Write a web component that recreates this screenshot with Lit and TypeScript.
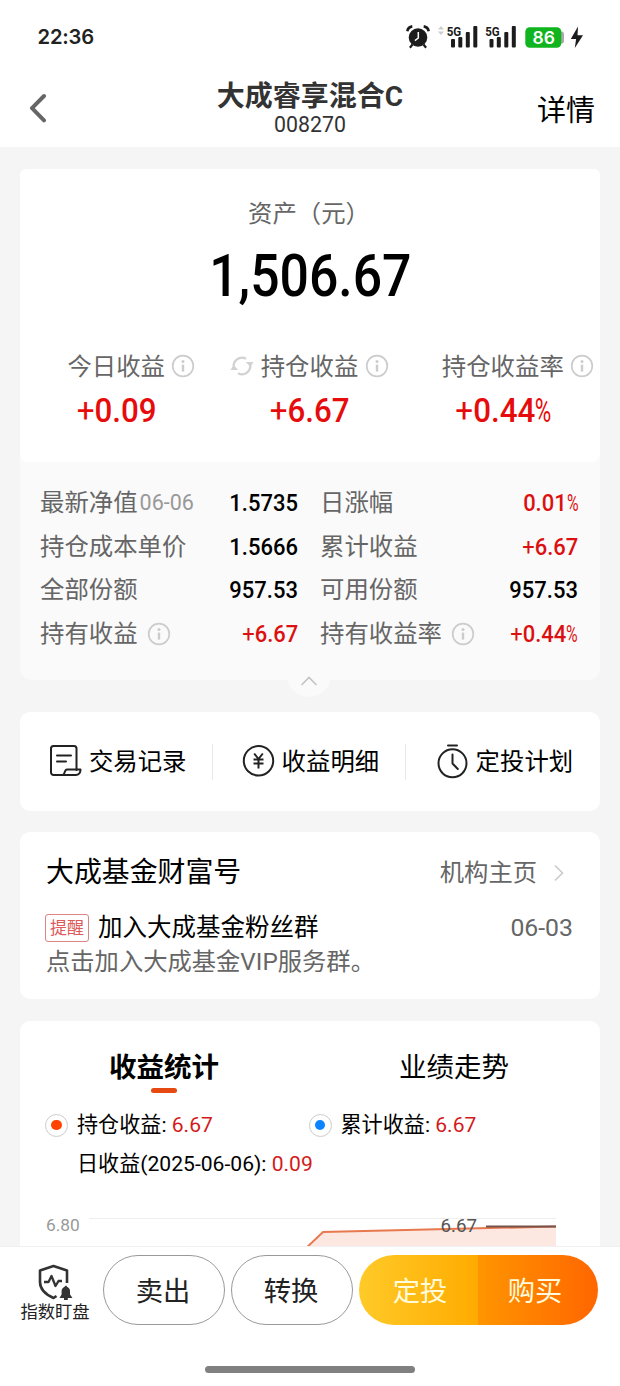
import { LitElement, html, css, svg, nothing } from "lit";
import { customElement, property } from "lit/decorators.js";

type Row = { label: string; date?: string; info?: boolean; value: string; red?: boolean };

const LEFT: Row[] = [
  { label: "最新净值", date: "06-06", value: "1.5735" },
  { label: "持仓成本单价", value: "1.5666" },
  { label: "全部份额", value: "957.53" },
  { label: "持有收益", info: true, value: "+6.67", red: true },
];
const RIGHT: Row[] = [
  { label: "日涨幅", value: "0.01%", red: true },
  { label: "累计收益", value: "+6.67", red: true },
  { label: "可用份额", value: "957.53" },
  { label: "持有收益率", info: true, value: "+0.44%", red: true },
];

const infoIcon = html`<svg width="24" height="24" viewBox="0 0 24 24" fill="none">
  <circle cx="12" cy="12" r="10.3" stroke="#ccc" stroke-width="1.7" />
  <circle cx="12" cy="7.4" r="1.5" fill="#ccc" />
  <path d="M12 10.6v7" stroke="#ccc" stroke-width="2.4" />
</svg>`;

const refreshIcon = html`<svg width="24" height="24" viewBox="0 0 24 24" fill="none" stroke="#d2d2d2" stroke-width="2.3">
  <path d="M4 14A8.3 8.3 0 0 1 16 4.7" />
  <path d="M20 10A8.3 8.3 0 0 1 8 19.3" />
  <path d="M0.5 16L3.6 11L8.2 16Z" fill="#d2d2d2" stroke="none" />
  <path d="M23.5 8L20.4 13L15.8 8Z" fill="#d2d2d2" stroke="none" />
</svg>`;

const bars = (x: number) => svg`
  <text x=${x - 4.3} y="35.6" font-family="Roboto" font-size="13.5" font-weight="700" textLength="14.5" lengthAdjust="spacingAndGlyphs" fill="#1c1c1c">5G</text>
  <rect x=${x} y="39" width="4" height="8.5" rx="1" />
  <rect x=${x + 7.3} y="37" width="4" height="10.5" rx="1" />
  <rect x=${x + 14.8} y="32" width="4" height="15.5" rx="1" />
  <rect x=${x + 22.3} y="26" width="4" height="21.5" rx="1" />`;

/** Narrow numeric figure, with a light percent sign. */
@customElement("num-text")
class NumText extends LitElement {
  @property() value = "";
  static styles = css`
    :host { display: inline-block; white-space: nowrap; font-family: Roboto, sans-serif; font-weight: 500; }
    .pct { display: inline-block; font-weight: 400; transform: scaleX(0.72); transform-origin: left; margin-right: -0.2em; }
    .plus { font-weight: 400; }
  `;
  render() {
    const plus = this.value.startsWith("+");
    const pct = this.value.endsWith("%");
    const body = this.value.replace(/[+%]/g, "");
    return html`${plus ? html`<span class="plus">+</span>` : nothing}${body}${pct ? html`<span class="pct">%</span>` : nothing}`;
  }
}

@customElement("app-root")
class AppRoot extends LitElement {
  static styles = css`
    :host {
      display: flex; flex-direction: column; width: 620px; height: 1386px; overflow: hidden;
      background: #f5f5f5; color: #000; font-weight: 400;
      font-family: Roboto, "Noto Sans CJK SC", sans-serif; font-size: 24.4px;
    }
    * { box-sizing: border-box; }
    svg { display: block; flex: none; }
    .status { height: 73px; flex: none; background: #fff; display: flex; }
    .time { width: 400px; padding-left: 37.5px; font: 600 20.2px/74px Inter, sans-serif; color: #222; letter-spacing: -0.2px; }
    .head { height: 74px; flex: none; background: #fff; display: grid; grid-template-columns: 150px 1fr 150px; }
    .back { padding: 20px 0 0 28px; }
    .titles { text-align: center; color: #333; }
    .title { font-size: 28px; line-height: 34px; font-weight: 700; padding-top: 7px; height: 40px; }
    .code { font-size: 21.3px; line-height: 24px; }
    .more { font-size: 29px; line-height: 76px; text-align: right; padding-right: 25px; }
    .scroll { flex: none; height: 1099px; overflow: hidden; padding: 22px 20px 0; display: flex; flex-direction: column; }
    .card { flex: none; background: #fff; border-radius: 10px; }
    .asset { position: relative; height: 511px; background: #fafafa; border-radius: 6px 6px 12px 12px; }
    .top { height: 293px; background: #fff; border-radius: 6px 6px 8px 8px; }
    .cap { height: 88px; line-height: 90px; text-align: center; color: #666; padding-right: 2px; }
    .big { height: 40px; display: flex; justify-content: center; line-height: 38px; font-size: 60px; }
    .big num-text { transform: scaleX(0.862); }
    .metrics { display: grid; grid-template-columns: repeat(3, 1fr); padding-top: 52px; }
    .metric { display: grid; grid-template-columns: 1fr auto 1fr; height: 34px; line-height: 36px; color: #666; align-items: center; white-space: nowrap; }
    .metric > span { position: relative; left: -0.5px; }
    .metric > .lead, .metric > .trail { top: -1px; }
    .lead { display: flex; justify-content: flex-end; padding-right: 7px; }
    .trail { padding-left: 6.5px; }
    .mv { text-align: center; color: #e60c0c; font-size: 33.5px; line-height: 56px; height: 56px; }
    .mv num-text { transform: scaleX(0.935); }
    .details { display: grid; grid-template-columns: 258px 258px; column-gap: 22px; padding: 19.5px 20px 0; }
    .row { height: 43.5px; display: flex; align-items: center; color: #666; line-height: 44px; white-space: nowrap; }
    .date { font-size: 21.5px; color: #999; padding-left: 2px; }
    .row .ic { padding-left: 9px; }
    .row num-text { margin-left: auto; font-size: 24px; color: #000; transform: scaleX(0.915); transform-origin: right; }
    .row num-text.red { color: #dc1010; }
    .bump { position: absolute; left: 267px; top: 484px; width: 44px; height: 44px; border-radius: 22px; background: #fafafa; display: flex; justify-content: center; padding-top: 21px; }
    .actions { margin-top: 32px; height: 99px; display: flex; align-items: center; }
    .action { width: 193px; height: 36px; display: flex; align-items: center; justify-content: center; gap: 7px; line-height: 36px; white-space: nowrap; padding-left: 3px; }
    .action:first-child { width: 192.4px; }
    .action svg { margin-top: -2px; }
    .action + .action { border-left: 1px solid #e8e8e8; padding-left: 2px; }
    .action + .action + .action { padding-left: 4px; }
    .wealth { margin-top: 21px; height: 167px; padding: 20px 27px 0 26px; }
    .line { display: flex; align-items: center; white-space: nowrap; }
    .wt { height: 42px; font-size: 27.9px; line-height: 46px; }
    .home { margin-left: auto; font-size: 24.3px; line-height: 44px; color: #666; display: flex; align-items: center; gap: 16px; padding-right: 8px; }
    .msg { margin-top: 17px; height: 34px; font-size: 24.5px; line-height: 38px; }
    .badge { width: 44px; height: 28px; margin: 0 9px 0 -1px; border: 1px solid #dc8383; border-radius: 3px; color: #dc5a5a; font-size: 17px; line-height: 27px; text-align: center; }
    .md { margin-left: auto; color: #666; font-size: 24.8px; line-height: 36px; }
    .sub { color: #666; font-size: 24.3px; line-height: 35px; height: 32px; }
    .stats { margin-top: 22px; height: 260px; }
    .tabs { display: grid; grid-template-columns: 1fr 1fr; height: 72px; text-align: center; font-size: 27.5px; }
    .tab { line-height: 93px; height: 72px; display: flex; flex-direction: column; align-items: center; padding-right: 2px; }
    .tab span { height: 67px; }
    .tab.on { font-weight: 700; }
    .tab i { width: 26px; height: 5px; border-radius: 3px; background: #e64a12; }
    .legend { display: grid; grid-template-columns: 263.5px 1fr; padding-left: 25px; font-size: 21.1px; height: 64px; align-items: center; line-height: 38px; }
    .key { display: flex; align-items: center; gap: 9px; white-space: pre; }
    .dot { width: 23px; height: 23px; border: 1px solid #ccc; border-radius: 50%; display: flex; align-items: center; justify-content: center; }
    .dot b { width: 10.5px; height: 10.5px; border-radius: 50%; background: #ff4400; }
    .dot.blue b { background: #0a84ff; }
    .r { color: #d31a1a; }
    .day { padding-left: 57px; margin-top: -12px; height: 38px; line-height: 38px; font-size: 21.1px; white-space: pre; }
    .foot { flex: none; height: 140px; background: #fff; border-top: 1px solid #f0f0f0; display: flex; flex-direction: column; align-items: center; }
    .btns { display: flex; width: 620px; height: 119px; padding: 8px 0 0 10px; }
    .watch { width: 93px; padding: 8px 3px 0 0; display: flex; flex-direction: column; align-items: center; color: #222; font-size: 17.3px; line-height: 24px; }
    .pill { width: 122px; height: 70px; border: 1px solid #999; border-radius: 35px; margin-right: 6px; padding-right: 2px; font-size: 27.3px; line-height: 72px; text-align: center; color: #222; }
    .duo { display: flex; width: 239px; height: 70px; border-radius: 35px; overflow: hidden; color: #fffbdc; font-size: 27.3px; line-height: 74px; text-align: center; }
    .a { width: 119px; padding-left: 3px; background: linear-gradient(90deg, #ffca28, #ffab00); }
    .b { width: 120px; padding-right: 6px; background: linear-gradient(90deg, #ff9500, #ff6600); }
    .bar { width: 210px; height: 7px; border-radius: 4px; background: #808080; }
  `;

  row(r: Row) {
    return html`<div class="row">
      <span>${r.label}</span>
      ${r.date ? html`<span class="date">${r.date}</span>` : nothing}
      ${r.info ? html`<span class="ic">${infoIcon}</span>` : nothing}
      <num-text class=${r.red ? "red" : ""} .value=${r.value}></num-text>
    </div>`;
  }

  metric(label: string, value: string, refresh = false) {
    return html`<div>
      <div class="metric">
        <span class="lead">${refresh ? refreshIcon : nothing}</span><span>${label}</span><span class="trail">${infoIcon}</span>
      </div>
      <div class="mv"><num-text .value=${value}></num-text></div>
    </div>`;
  }

  render() {
    return html`
      <div class="status">
        <div class="time">22:36</div>
        <svg width="200" height="73" viewBox="400 0 200 73" fill="#1c1c1c">
          <circle cx="418" cy="37.5" r="9.3" />
          <path d="M407.3 31.2a6 6 0 0 1 5-4.8M428.7 31.2a6 6 0 0 0-5-4.8" fill="none" stroke="#1c1c1c" stroke-width="2.6" />
          <path d="M412.5 44.5l-2.6 3.2M423.5 44.5l2.6 3.2" stroke="#1c1c1c" stroke-width="2.2" />
          <path d="M418.3 32v6l-3.4 2.6" fill="none" stroke="#fff" stroke-width="1.5" />
          <path d="M441 26l3 3.6h-6zM441 35l3-3.6h-6z" fill="#ccc" />
          ${bars(451)} ${bars(489.5)}
          <path d="M560 31.5h1.5a2.5 2.5 0 0 1 2.5 2.5v7a2.5 2.5 0 0 1-2.5 2.5H560z" fill="#aaa" />
          <rect x="525.3" y="27.3" width="36" height="20.5" rx="4.5" fill="#0fb41e" />
          <text x="543.8" y="44" text-anchor="middle" font-family="Inter" font-size="17.5" font-weight="600" fill="#fff">86</text>
          <path d="M578 26.5L570.8 39h5.3l-1.3 9L583 35.3h-5.5z" />
        </svg>
      </div>
      <div class="head">
        <div class="back"><svg width="20" height="30" viewBox="0 0 20 30" fill="none"><path d="M16 3L4 15.2L16 27.4" stroke="#666" stroke-width="4" stroke-linecap="round" stroke-linejoin="round" /></svg></div>
        <div class="titles"><div class="title">大成睿享混合C</div><div class="code">008270</div></div>
        <div class="more">详情</div>
      </div>
      <div class="scroll">
        <div class="card asset">
          <div class="top">
            <div class="cap">资产（元）</div>
            <div class="big"><num-text .value=${"1,506.67"}></num-text></div>
            <div class="metrics">
              ${this.metric("今日收益", "+0.09")} ${this.metric("持仓收益", "+6.67", true)} ${this.metric("持仓收益率", "+0.44%")}
            </div>
          </div>
          <div class="details">
            <div>${LEFT.map((r) => this.row(r))}</div>
            <div>${RIGHT.map((r) => this.row(r))}</div>
          </div>
          <div class="bump"><svg width="18" height="14" viewBox="0 0 18 14" fill="none"><path d="M1.5 11L9 3.5L16.5 11" stroke="#c4c4c4" stroke-width="1.7" /></svg></div>
        </div>

        <div class="card actions">
          <div class="action">
            <svg width="33" height="34" viewBox="0 0 33 34" fill="none" stroke="#222" stroke-width="2" stroke-linecap="round" stroke-linejoin="round">
              <path d="M27.5 26V4.5a2.5 2.5 0 0 0-2.5-2.5H4.5A2.5 2.5 0 0 0 2 4.5V28.5A2.5 2.5 0 0 0 4.5 31H26.5" />
              <path d="M14 31c2-1 1.5-5.5 4-5.5H31.5c0 3.5-2 5.5-5 5.5" />
              <path d="M8 11.5H22M8 17.5H17" />
            </svg>交易记录
          </div>
          <div class="action">
            <svg width="33" height="34" viewBox="0 0 33 34" fill="none" stroke="#222" stroke-width="2">
              <circle cx="16.5" cy="16.8" r="14.7" />
              <path d="M12.2 9.5L16.5 15L20.8 9.5M16.5 15V24.5M11.5 15.5H21.5M11.5 19.5H21.5" />
            </svg>收益明细
          </div>
          <div class="action">
            <svg width="33" height="36" viewBox="0 0 33 36" fill="none" stroke="#222" stroke-width="2" stroke-linecap="round">
              <circle cx="16.5" cy="20.3" r="14" />
              <path d="M12 2.5H21M16.5 11.5V20.5L21.8 26" stroke-linejoin="round" />
            </svg>定投计划
          </div>
        </div>

        <div class="card wealth">
          <div class="line wt"><span>大成基金财富号</span>
            <span class="home">机构主页<svg width="12" height="18" viewBox="0 0 12 18" fill="none"><path d="M2 1.5L9.5 9L2 16.5" stroke="#ccc" stroke-width="1.7" /></svg></span>
          </div>
          <div class="line msg"><span class="badge">提醒</span><span>加入大成基金粉丝群</span><span class="md">06-03</span></div>
          <div class="line sub">点击加入大成基金VIP服务群。</div>
        </div>

        <div class="card stats">
          <div class="tabs">
            <div class="tab on"><span>收益统计</span><i></i></div>
            <div class="tab"><span>业绩走势</span></div>
          </div>
          <div class="legend">
            <div class="key"><span class="dot"><b></b></span><span>持仓收益: <span class="r">6.67</span></span></div>
            <div class="key"><span class="dot blue"><b></b></span><span>累计收益: <span class="r">6.67</span></span></div>
          </div>
          <div class="day">日收益(2025-06-06): <span class="r">0.09</span></div>
          <svg width="580" height="70" viewBox="20 1183 580 70" font-family="Roboto">
            <path d="M89 1218.5H556" stroke="#eee" />
            <path d="M302 1252L323 1232L556 1226.5V1253H302z" fill="#fce8e0" />
            <path d="M302 1252L323 1232L556 1226.5" fill="none" stroke="#e8794f" stroke-width="2" />
            <path d="M486 1226.5H556" stroke="#75524a" stroke-width="2" />
            <text x="46" y="1231.3" font-size="17.3" fill="#999">6.80</text>
            <text x="440.5" y="1232.3" font-size="18.7" fill="#555">6.67</text>
          </svg>
        </div>
      </div>

      <div class="foot">
        <div class="btns">
          <div class="watch">
            <svg width="36" height="37" viewBox="0 0 36 37" fill="none" stroke="#333" stroke-width="2.6" stroke-linejoin="round">
              <path d="M30 20V7.5L16.5 3L3 7.5V19c0 7 4.5 12 13.5 16l3-2" />
              <path d="M7 19H11.5L14.5 13L18.5 23L21.5 18H25" stroke-width="2.3" />
              <path d="M22.5 35h13l-2.5-3.500v-3.500a4.200 4.200 0 0 0-8.400 0v3.500zM27 35h3.800v2h-3.800z" fill="#333" stroke="none" />
              <path d="M28.8 22.8v2" stroke-width="2" />
            </svg>
            指数盯盘
          </div>
          <div class="pill">卖出</div>
          <div class="pill">转换</div>
          <div class="duo"><div class="a">定投</div><div class="b">购买</div></div>
        </div>
        <div class="bar"></div>
      </div>
    `;
  }
}
